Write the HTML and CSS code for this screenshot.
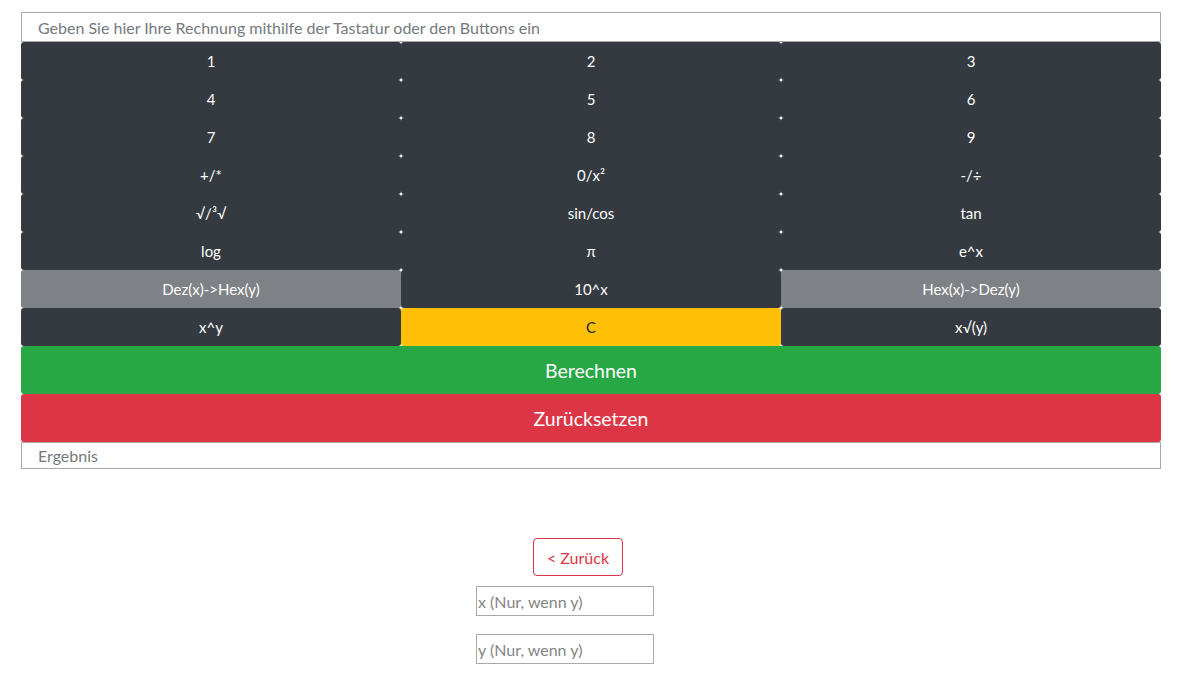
FILE: index.html
```html
<!DOCTYPE html>
<html lang="de">
<head>
<meta charset="utf-8">
<title>Rechner</title>
<link rel="stylesheet" href="styles.css">
</head>
<body>
<div class="calc">
  <input class="field" type="text" placeholder="Geben Sie hier Ihre Rechnung mithilfe der Tastatur oder den Buttons ein">
  <div class="grid">
    <button class="btn dark">1</button>
    <button class="btn dark">2</button>
    <button class="btn dark">3</button>
    <button class="btn dark">4</button>
    <button class="btn dark">5</button>
    <button class="btn dark">6</button>
    <button class="btn dark">7</button>
    <button class="btn dark">8</button>
    <button class="btn dark">9</button>
    <button class="btn dark">+/*</button>
    <button class="btn dark">0/x²</button>
    <button class="btn dark">-/÷</button>
    <button class="btn dark">√/³√</button>
    <button class="btn dark">sin/cos</button>
    <button class="btn dark">tan</button>
    <button class="btn dark">log</button>
    <button class="btn dark">π</button>
    <button class="btn dark">e^x</button>
    <button class="btn gray">Dez(x)-&gt;Hex(y)</button>
    <button class="btn dark">10^x</button>
    <button class="btn gray">Hex(x)-&gt;Dez(y)</button>
    <button class="btn dark">x^y</button>
    <button class="btn yellow">C</button>
    <button class="btn dark">x√(y)</button>
  </div>
  <button class="btn big green">Berechnen</button>
  <button class="btn big red">Zurücksetzen</button>
  <input class="field result" type="text" placeholder="Ergebnis">
</div>
<div class="extra">
  <button class="back">&lt; Zurück</button>
  <input class="small" type="text" placeholder="x (Nur, wenn y)">
  <input class="small second" type="text" placeholder="y (Nur, wenn y)">
</div>
</body>
</html>
```
FILE: styles.css
```css
html, body {
  margin: 0;
  padding: 0;
  background: #fff;
  font-family: Lato, "Liberation Sans", sans-serif;
}
.calc {
  width: 1140px;
  margin: 12px 0 0 21px;
  display: flex;
  flex-direction: column;
}
.field {
  box-sizing: border-box;
  width: 1140px;
  height: 30px;
  margin: 0;
  border: 1px solid #a9a9a9;
  padding: 0 16px;
  font-family: inherit;
  font-size: 16px;
  color: #495057;
  outline: none;
}
.field::placeholder { color: #74797e; }
.result { height: 27px; }
.grid {
  display: grid;
  grid-template-columns: repeat(3, 380px);
  grid-auto-rows: 38px;
}
.btn {
  border: none;
  margin: 0;
  padding: 0;
  border-radius: 3px;
  font-family: inherit;
  font-size: 15px;
  color: #fff;
  cursor: pointer;
}
.dark { background: #343a40; }
.gray { background: #7e8185; }
.yellow { background: #ffc107; color: #212529; }
.big {
  height: 48px;
  width: 1140px;
  font-size: 19.5px;
}
.green { background: #28a745; }
.red { background: #dc3545; }
.extra {
  display: flex;
  flex-direction: column;
  align-items: flex-start;
  padding-left: 476px;
  margin-top: 69px;
}
.back {
  margin-left: 57px;
  width: 90px;
  height: 38px;
  background: #fff;
  border: 1px solid #dc3545;
  border-radius: 4px;
  color: #dc3545;
  font-family: inherit;
  font-size: 16px;
  padding: 0;
}
.small {
  box-sizing: border-box;
  width: 178px;
  height: 30px;
  margin-top: 10px;
  border: 1px solid #a9a9a9;
  padding: 0 1px;
  font-family: inherit;
  font-size: 16px;
}
.small::placeholder { color: #858585; }
.second { margin-top: 18px; }
```
